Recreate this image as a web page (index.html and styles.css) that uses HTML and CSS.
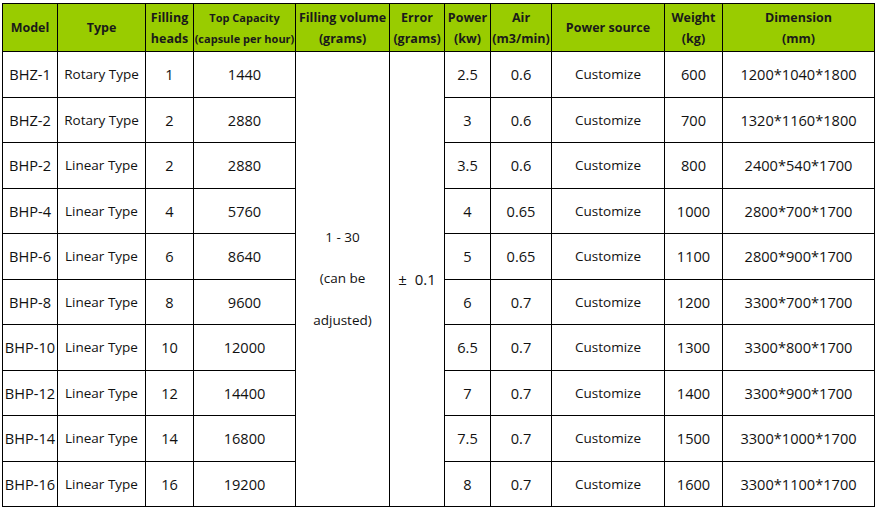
FILE: index.html
```html
<!DOCTYPE html>
<html lang="en">
<head>
<meta charset="utf-8">
<title>Capsule filling machine specifications</title>
<link rel="stylesheet" href="styles.css">
</head>
<body>
<table class="spec">
  <colgroup>
    <col class="c-model">
    <col class="c-type">
    <col class="c-heads">
    <col class="c-cap">
    <col class="c-vol">
    <col class="c-err">
    <col class="c-pow">
    <col class="c-air">
    <col class="c-src">
    <col class="c-wt">
    <col class="c-dim">
  </colgroup>
  <thead>
    <tr>
      <th>Model</th>
      <th>Type</th>
      <th>Filling<br>heads</th>
      <th class="small">Top Capacity<br>(capsule per hour)</th>
      <th>Filling volume<br>(grams)</th>
      <th>Error<br>(grams)</th>
      <th>Power<br>(kw)</th>
      <th>Air<br>(m3/min)</th>
      <th>Power source</th>
      <th>Weight<br>(kg)</th>
      <th>Dimension<br>(mm)</th>
    </tr>
  </thead>
  <tbody>
    <tr>
      <td>BHZ-1</td><td class="txt">Rotary Type</td><td>1</td><td>1440</td>
      <td rowspan="10" class="merged">1 - 30<br>(can be<br>adjusted)</td>
      <td rowspan="10" class="err">±&nbsp; 0.1</td>
      <td>2.5</td><td>0.6</td><td class="txt">Customize</td><td>600</td><td>1200*1040*1800</td>
    </tr>
    <tr>
      <td>BHZ-2</td><td class="txt">Rotary Type</td><td>2</td><td>2880</td>
      <td>3</td><td>0.6</td><td class="txt">Customize</td><td>700</td><td>1320*1160*1800</td>
    </tr>
    <tr>
      <td>BHP-2</td><td class="txt">Linear Type</td><td>2</td><td>2880</td>
      <td>3.5</td><td>0.6</td><td class="txt">Customize</td><td>800</td><td>2400*540*1700</td>
    </tr>
    <tr>
      <td>BHP-4</td><td class="txt">Linear Type</td><td>4</td><td>5760</td>
      <td>4</td><td>0.65</td><td class="txt">Customize</td><td>1000</td><td>2800*700*1700</td>
    </tr>
    <tr>
      <td>BHP-6</td><td class="txt">Linear Type</td><td>6</td><td>8640</td>
      <td>5</td><td>0.65</td><td class="txt">Customize</td><td>1100</td><td>2800*900*1700</td>
    </tr>
    <tr>
      <td>BHP-8</td><td class="txt">Linear Type</td><td>8</td><td>9600</td>
      <td>6</td><td>0.7</td><td class="txt">Customize</td><td>1200</td><td>3300*700*1700</td>
    </tr>
    <tr>
      <td>BHP-10</td><td class="txt">Linear Type</td><td>10</td><td>12000</td>
      <td>6.5</td><td>0.7</td><td class="txt">Customize</td><td>1300</td><td>3300*800*1700</td>
    </tr>
    <tr>
      <td>BHP-12</td><td class="txt">Linear Type</td><td>12</td><td>14400</td>
      <td>7</td><td>0.7</td><td class="txt">Customize</td><td>1400</td><td>3300*900*1700</td>
    </tr>
    <tr>
      <td>BHP-14</td><td class="txt">Linear Type</td><td>14</td><td>16800</td>
      <td>7.5</td><td>0.7</td><td class="txt">Customize</td><td>1500</td><td>3300*1000*1700</td>
    </tr>
    <tr>
      <td>BHP-16</td><td class="txt">Linear Type</td><td>16</td><td>19200</td>
      <td>8</td><td>0.7</td><td class="txt">Customize</td><td>1600</td><td>3300*1100*1700</td>
    </tr>
  </tbody>
</table>
</body>
</html>
```

FILE: styles.css
```css
html, body {
  margin: 0;
  padding: 0;
  background: #ffffff;
}

body {
  padding: 3px 0 0 2px;
  font-family: "Open Sans", "Noto Sans", "Liberation Sans", sans-serif;
  color: #111111;
}

.spec {
  border-collapse: collapse;
  table-layout: fixed;
  width: 873px;
}

.c-model { width: 55px; }
.c-type { width: 88px; }
.c-heads { width: 48px; }
.c-cap { width: 102px; }
.c-vol { width: 94px; }
.c-err { width: 55px; }
.c-pow { width: 46px; }
.c-air { width: 61px; }
.c-src { width: 113px; }
.c-wt { width: 58px; }
.c-dim { width: 152px; }

.spec th,
.spec td {
  border: 1.5px solid #000000;
  padding: 0;
  text-align: center;
  vertical-align: middle;
  white-space: nowrap;
  overflow: visible;
}

.spec th {
  background: #99cc00;
  font-weight: 700;
  font-size: 12.5px;
  line-height: 21px;
  height: 47px;
  color: #1a1a1a;
}

.spec th.small {
  font-size: 11px;
}

.spec td {
  font-size: 14.6px;
  height: 44.5px;
  line-height: 18px;
}

.spec td.txt {
  font-size: 13.5px;
}

.spec td.merged {
  font-size: 13.5px;
  line-height: 41.5px;
}

.spec td.err {
  font-size: 15px;
}
```
